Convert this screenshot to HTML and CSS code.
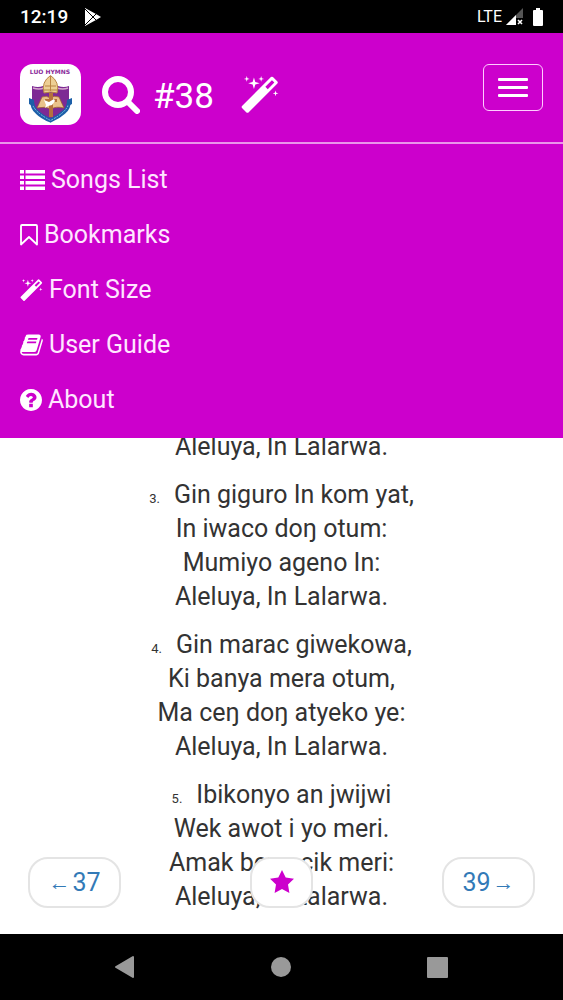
FILE: index.html
```html
<!DOCTYPE html>
<html lang="ach">
<head>
    <meta charset="UTF-8">
    <meta name="viewport" content="width=device-width, initial-scale=1.0">
    <title>Luo Hymns</title>
    <link rel="stylesheet" href="styles.css">
</head>
<body>
<div class="status-bar">
    <span class="clock">12:19</span>
    <svg class="play" width="18" height="18" viewBox="0 0 18 18">
        <path fill="#fff" d="M1 0L12 6 17 9 12 12 1 18z"/>
        <path stroke="#000" stroke-width="1" fill="none" d="M1 1l12 12M1 17L13 5"/>
    </svg>
    <span class="network">LTE</span>
    <svg class="signal" width="17" height="17" viewBox="0 0 17 17">
        <path fill="#555" d="M17 0v17H0z"/>
        <path fill="#fff" d="M10 7v10H0z"/>
        <path fill="#000" d="M10 10h7v7h-7z"/>
        <path stroke="#fff" stroke-width="1.6" d="M12 12l4 4M16 12l-4 4"/>
    </svg>
    <svg width="10" height="18" viewBox="0 0 10 18">
        <path fill="#fff" d="M3 0h4v2h2q1 0 1 1v14q0 1-1 1H1q-1 0-1-1V3q0-1 1-1h2z"/>
    </svg>
</div>

<header>
    <div class="top-bar">
        <a class="logo" href="#" aria-label="Luo Hymns">
            <svg width="61" height="61" viewBox="0 0 61 61">
                <rect width="61" height="61" rx="13" fill="#fff"/>
                <path fill="#7d2a94" d="M12 22q6 2 11 0h15q6 2 11 0v17q-3 11-19 17-15-6-18-17z"/>
                <path fill="none" stroke="#d8a9cf" stroke-width="1.5" d="M13 24q6 2 11 0M37 24q6 2 11 0"/>
                <path fill="none" stroke="#1c5fa8" stroke-width="4" d="M12 36q0 8 5 12 5 5 13.500 8.500 8-3.500 13.500-8.500 5-4 5-12"/>
                <path fill="none" stroke="#8fc0e6" stroke-width="1" stroke-dasharray="2 1" d="M12 39q2 9 18.500 17.500Q47 48 49 39"/>
                <path fill="#1c5fa8" d="M9 34l5 2-1 6-4-2zM52 34l-5 2 1 6 4-2z"/>
                <path fill="#e9c28a" stroke="#9c6028" stroke-width=".7" d="M22 33q5-2 8 1 4-3 9-1l5 11q-8-2-13 1-6-3-14-1z"/>
                <path fill="#b5713c" d="M29 29h4v6h4v3h-4v15h-4V38h-4v-3h4z"/>
                <path fill="#fff" d="M24 36l5 2 5-3 1 2-3 4-4 1-3 2 1-3z"/>
                <path fill="#edcf94" stroke="#b98443" stroke-width="1" d="M24 29q-3-11 6.500-17.500Q40 18 37 29q-6-2-13 0z"/>
                <path stroke="#b98443" stroke-width="1" fill="none" d="M30.500 12v15M25 22h11M24 26h13"/>
                <text x="30" y="10" text-anchor="middle" class="logo-text">LUO HYMNS</text>
            </svg>
        </a>
        <a class="search" href="#" aria-label="Search">
            <svg width="38" height="38" viewBox="0 0 38 38" fill="none" stroke="#fff">
                <circle cx="16" cy="16" r="13" stroke-width="6"/>
                <path d="M26 26l9 9" stroke-width="6" stroke-linecap="round"/>
            </svg>
        </a>
        <span class="song-number">#38</span>
        <a class="wand" href="#" aria-label="Font size">
            <svg width="38" height="37" viewBox="0 0 1690 1640" fill="#fff">
                <path id="wand" d="M1190 581l293-293-107-107-293 293zm447-293q0 27-18 45l-1286 1286q-18 18-45 18t-45-18l-198-198q-18-18-18-45t18-45l1286-1286q18-18 45-18t45 18l198 198q18 18 18 45zm-1351-190l98 30-98 30-30 98-30-98-98-30 98-30 30-98zm350 162l196 60-196 60-60 196-60-196-196-60 196-60 60-196zm930 478l98 30-98 30-30 98-30-98-98-30 98-30 30-98zm-640-640l98 30-98 30-30 98-30-98-98-30 98-30 30-98z"/>
            </svg>
        </a>
        <button class="toggle" aria-label="Toggle menu">
            <span></span>
            <span></span>
            <span></span>
        </button>
    </div>
    <nav class="menu">
        <a href="#">
            <svg width="25" height="20" viewBox="0 0 25 20">
                <path d="M0 0h4v3.500H0zM0 5.500h4V9H0zM0 11h4v3.500H0zM0 16.500h4V20H0zM5.500 0H25v3.500H5.500zM5.500 5.500H25V9H5.500zM5.500 11H25v3.500H5.500zM5.500 16.500H25V20H5.500z"/>
            </svg>
            Songs List
        </a>
        <a href="#">
            <svg width="18" height="22" viewBox="0 0 18 22">
                <path fill="none" stroke="#fff" stroke-width="1.800" stroke-linejoin="round" d="M2 1h14q1 0 1 1v18.500L9 13l-8 7.500V2q0-1 1-1z"/>
            </svg>
            Bookmarks
        </a>
        <a href="#">
            <svg width="23" height="22" viewBox="0 0 1690 1640"><use href="#wand"/></svg>
            Font Size
        </a>
        <a href="#">
            <svg width="23" height="22" viewBox="50 100 1690 1590">
                <path d="M1703 478q40 57 18 129l-275 906q-19 64-76.500 107.500t-122.500 43.500h-923q-77 0-148.500-53.500t-99.500-131.500q-24-67-2-127 0-4 3-27t4-37q1-8-3-21.500t-3-19.500q2-11 8-21t16.500-23.500 16.500-23.500q23-38 45-91.500t30-91.500q3-10 .5-30t-.5-28q3-11 17-28t17-23q21-36 42-92t25-90q1-9-2.500-32t.5-28q4-13 22-30.500t22-22.500q19-26 42.500-84.500t27.500-96.500q1-8-3-25.500t-2-26.500q2-8 9-18t18-23 17-21q8-12 16.500-30.500t15-35 16-36 19.500-32 26.500-23.500 36-11.500 47.500 5.500l-1 3q38-9 51-9h761q74 0 114 56t18 130l-274 906q-36 119-71.500 153.500t-128.500 34.500h-869q-27 0-38 15-11 16-1 43 24 70 144 70h923q29 0 56-15.500t35-41.500l300-987q7-22 5-57 38 15 59 43zm-1064 2q-4 13 2 22.500t20 9.500h608q13 0 25.500-9.500t16.500-22.500l21-64q4-13-2-22.500t-20-9.500h-608q-13 0-25.500 9.500t-16.500 22.500zm-83 256q-4 13 2 22.500t20 9.500h608q13 0 25.500-9.500t16.500-22.500l21-64q4-13-2-22.500t-20-9.500h-608q-13 0-25.500 9.500t-16.500 22.500z"/>
            </svg>
            User Guide
        </a>
        <a href="#">
            <svg width="22" height="22" viewBox="128 128 1536 1536">
                <path d="M1024 1376v-192q0-14-9-23t-23-9h-192q-14 0-23 9t-9 23v192q0 14 9 23t23 9h192q14 0 23-9t9-23zm256-672q0-88-55.500-163t-138.500-116-170-41q-243 0-371 213-15 24 8 42l132 100q7 6 19 6 16 0 25-12 53-68 86-92 34-24 86-24 48 0 85.500 26t37.500 59q0 38-20 61t-68 45q-63 28-115.500 86.500t-52.500 125.500v36q0 14 9 23t23 9h192q14 0 23-9t9-23q0-19 21.500-49.500t54.500-49.500q32-18 49-28.500t46-35 44.500-48 28-60.500 12.500-81zm384 192q0 209-103 385.500t-279.500 279.500-385.500 103-385.500-103-279.500-279.500-103-385.500 103-385.500 279.500-279.500 385.500-103 385.500 103 279.500 279.500 103 385.500z"/>
            </svg>
            About
        </a>
    </nav>
</header>

<main>
    <p>Aleluya, In Lalarwa.</p>
    <p>
        <span class="verse">3.</span>Gin giguro In kom yat,<br>
        In iwaco doŋ otum:<br>
        Mumiyo ageno In:<br>
        Aleluya, In Lalarwa.
    </p>
    <p>
        <span class="verse">4.</span>Gin marac giwekowa,<br>
        Ki banya mera otum,<br>
        Ma ceŋ doŋ atyeko ye:<br>
        Aleluya, In Lalarwa.
    </p>
    <p>
        <span class="verse">5.</span>Ibikonyo an jwijwi<br>
        Wek awot i yo meri.<br>
        Amak bene cik meri:<br>
        Aleluya, In Lalarwa.
    </p>
    <div class="pager">
        <a href="#"><span class="arrow">←</span>37</a>
        <button aria-label="Bookmark this song">
            <svg width="24" height="23" viewBox="0 0 24 23">
                <path fill="#c0c" d="M12 0l3.700 7.600 8.300 1.200-6 5.800 1.400 8.300L12 19l-7.400 3.900L6 14.600 0 8.800l8.300-1.200z"/>
            </svg>
        </button>
        <a href="#">39<span class="arrow">→</span></a>
    </div>
</main>

<footer>
    <svg width="20" height="24" viewBox="0 0 20 24">
        <path fill="#999" stroke="#999" stroke-width="2" stroke-linejoin="round" d="M18 2v20L1 12z"/>
    </svg>
    <svg width="20" height="20" viewBox="0 0 20 20">
        <circle cx="10" cy="10" r="10" fill="#999"/>
    </svg>
    <svg width="21" height="21" viewBox="0 0 21 21">
        <rect width="21" height="21" rx="1" fill="#999"/>
    </svg>
</footer>
</body>
</html>
```
FILE: styles.css
```css
* {
    box-sizing: border-box;
}
body {
    margin: 0;
    height: 100vh;
    display: flex;
    flex-direction: column;
    font-family: Roboto, sans-serif;
    font-size: 25px;
    color: #333;
    background: #fff;
}
a {
    text-decoration: none;
}
svg {
    display: block;
    flex-shrink: 0;
}
button {
    padding: 0;
    cursor: pointer;
}
.status-bar {
    display: flex;
    align-items: center;
    height: 33px;
    padding: 0 20px;
    background: #000;
    color: #fff;
}
.clock {
    font-size: 19px;
    font-weight: 500;
}
.play {
    margin-left: 16px;
}
.network {
    margin-left: auto;
    font-size: 16px;
}
.signal {
    margin: 0 10px 0 4px;
}
header {
    background: #c0c;
    color: #fff;
}
.top-bar {
    display: flex;
    align-items: center;
    padding: 31px 20px 17px;
    border-bottom: 2px solid #ea94ea;
}
.logo-text {
    font-family: "DejaVu Sans", sans-serif;
    font-size: 6px;
    font-weight: bold;
    fill: #8a2a9a;
}
.search {
    margin: 0 13px 0 21px;
}
.song-number {
    padding-top: 4px;
    font-size: 35px;
}
.wand {
    margin-left: 27px;
}
.toggle {
    display: flex;
    flex-direction: column;
    justify-content: center;
    align-items: center;
    align-self: flex-start;
    gap: 5px;
    width: 60px;
    height: 47px;
    margin-left: auto;
    background: none;
    border: 1px solid #fcf;
    border-radius: 6px;
}
.toggle span {
    width: 30px;
    height: 3px;
    border-radius: 1px;
    background: #fff;
}
.menu {
    padding: 8px 20px 11px;
}
.menu a {
    display: flex;
    align-items: center;
    gap: 6px;
    height: 55px;
    color: #ffe6ff;
}
.menu svg {
    fill: #fff;
}
main {
    position: relative;
    flex: 1;
    min-height: 0;
    display: flex;
    flex-direction: column;
    justify-content: flex-end;
    gap: 14px;
    padding-bottom: 20px;
    overflow: hidden;
    text-align: center;
    line-height: 34px;
}
p {
    margin: 0;
}
.verse {
    margin-right: 14px;
    font-size: 13px;
    line-height: 1;
}
/* floats over the lyrics */
.pager {
    position: absolute;
    left: 0;
    right: 0;
    bottom: 26px;
    display: flex;
    justify-content: space-between;
    padding: 0 28px;
}
.pager a, .pager button {
    display: flex;
    justify-content: center;
    align-items: center;
    gap: 2px;
    width: 93px;
    height: 51px;
    background: #fff;
    border: 2px solid #e4e4e4;
    border-radius: 20px;
    color: #337ab7;
}
.pager button {
    width: 63px;
    padding-bottom: 3px;
}
.arrow {
    font-family: "Liberation Serif", serif;
    font-size: 22px;
}
footer {
    display: flex;
    justify-content: space-between;
    align-items: center;
    height: 66px;
    padding: 0 115px;
    background: #000;
}
```
